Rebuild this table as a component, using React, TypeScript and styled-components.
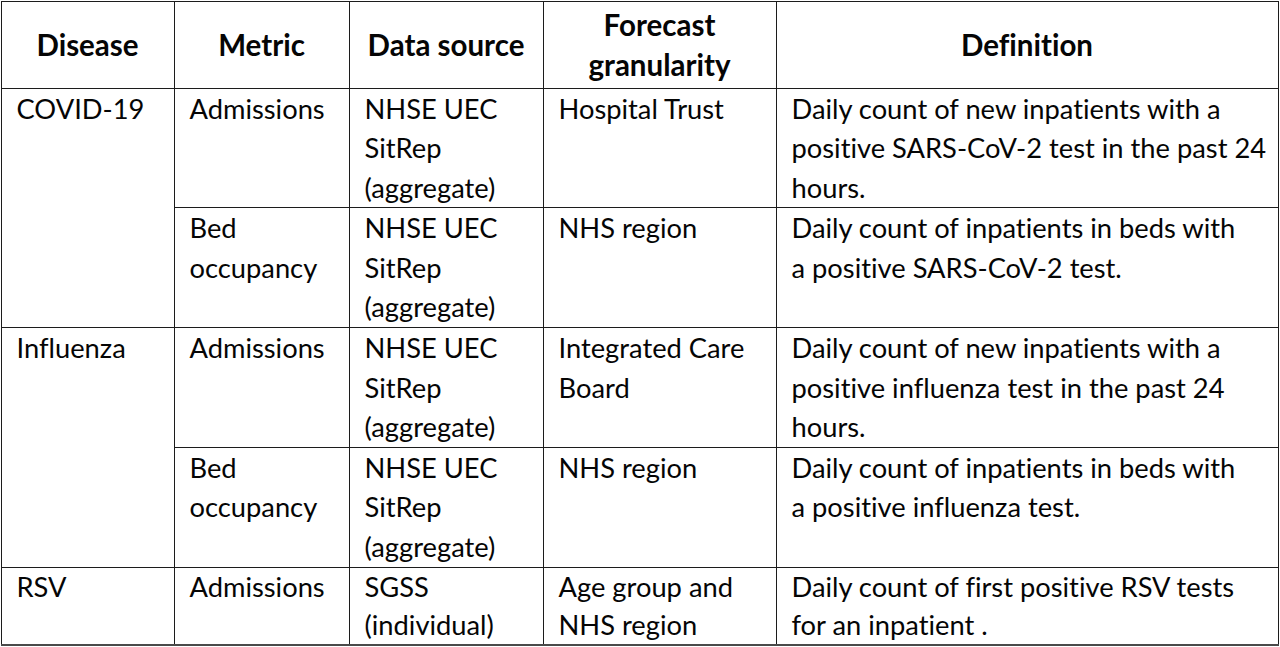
import React from "react";
import styled, { createGlobalStyle } from "styled-components";

const Global = createGlobalStyle`
  html, body { margin: 0; padding: 0; background: #ffffff; }
  body {
    font-family: Lato, "Open Sans", sans-serif;
    color: #050505;
    font-variant-ligatures: none;
    font-feature-settings: "liga" 0, "clig" 0;
  }
`;

const Table = styled.table`
  border-collapse: collapse;
  table-layout: fixed;
  width: 1277px;
  margin: 0.5px 0 0 0.5px;
  font-size: 27.3px;
  line-height: 39.6px;
`;

const HeadCell = styled.th`
  border: 1.5px solid #1c1c1c;
  font-size: 29.5px;
  font-weight: 700;
  text-align: center;
  vertical-align: middle;
  padding: 0 8px;
  height: 86px;
  white-space: nowrap;
`;

const Cell = styled.td<{ $last?: boolean }>`
  border: 1.5px solid #1c1c1c;
  border-bottom-color: ${(p) => (p.$last ? "#4a4a4a" : "#1c1c1c")};
  border-bottom-width: ${(p) => (p.$last ? "2.5px" : "1.5px")};
  text-align: left;
  vertical-align: top;
  padding: 0 10px 0 15px;
  height: ${(p) => (p.$last ? 76 : 118)}px;
  line-height: ${(p) => (p.$last ? "38.4px" : "39.6px")};
  white-space: nowrap;
  font-weight: 400;
`;

type Row = {
  disease?: { name: string; span: number };
  metric: string[];
  source: string[];
  gran: string[];
  def: string[];
  last?: boolean;
};

const rows: Row[] = [
  {
    disease: { name: "COVID-19", span: 2 },
    metric: ["Admissions"],
    source: ["NHSE UEC", "SitRep", "(aggregate)"],
    gran: ["Hospital Trust"],
    def: ["Daily count of new inpatients with a", "positive SARS-CoV-2 test in the past 24", "hours."],
  },
  {
    metric: ["Bed", "occupancy"],
    source: ["NHSE UEC", "SitRep", "(aggregate)"],
    gran: ["NHS region"],
    def: ["Daily count of inpatients in beds with", "a positive SARS-CoV-2 test."],
  },
  {
    disease: { name: "Influenza", span: 2 },
    metric: ["Admissions"],
    source: ["NHSE UEC", "SitRep", "(aggregate)"],
    gran: ["Integrated Care", "Board"],
    def: ["Daily count of new inpatients with a", "positive influenza test in the past 24", "hours."],
  },
  {
    metric: ["Bed", "occupancy"],
    source: ["NHSE UEC", "SitRep", "(aggregate)"],
    gran: ["NHS region"],
    def: ["Daily count of inpatients in beds with", "a positive influenza test."],
  },
  {
    disease: { name: "RSV", span: 1 },
    metric: ["Admissions"],
    source: ["SGSS", "(individual)"],
    gran: ["Age group and", "NHS region"],
    def: ["Daily count of first positive RSV tests", "for an inpatient ."],
    last: true,
  },
];

const Lines = ({ lines }: { lines: string[] }) => (
  <>
    {lines.map((l, i) => (
      <React.Fragment key={i}>
        {i > 0 && <br />}
        {l}
      </React.Fragment>
    ))}
  </>
);

export default function App() {
  return (
    <>
      <Global />
      <Table>
        <colgroup>
          <col style={{ width: 173 }} />
          <col style={{ width: 175 }} />
          <col style={{ width: 194 }} />
          <col style={{ width: 233 }} />
          <col style={{ width: 502 }} />
        </colgroup>
        <thead>
          <tr>
            <HeadCell>Disease</HeadCell>
            <HeadCell>Metric</HeadCell>
            <HeadCell>Data source</HeadCell>
            <HeadCell>
              Forecast
              <br />
              granularity
            </HeadCell>
            <HeadCell>Definition</HeadCell>
          </tr>
        </thead>
        <tbody>
          {rows.map((r, i) => (
            <tr key={i}>
              {r.disease && (
                <Cell rowSpan={r.disease.span} $last={r.last}>
                  {r.disease.name}
                </Cell>
              )}
              <Cell $last={r.last}>
                <Lines lines={r.metric} />
              </Cell>
              <Cell $last={r.last}>
                <Lines lines={r.source} />
              </Cell>
              <Cell $last={r.last}>
                <Lines lines={r.gran} />
              </Cell>
              <Cell $last={r.last}>
                <Lines lines={r.def} />
              </Cell>
            </tr>
          ))}
        </tbody>
      </Table>
    </>
  );
}
